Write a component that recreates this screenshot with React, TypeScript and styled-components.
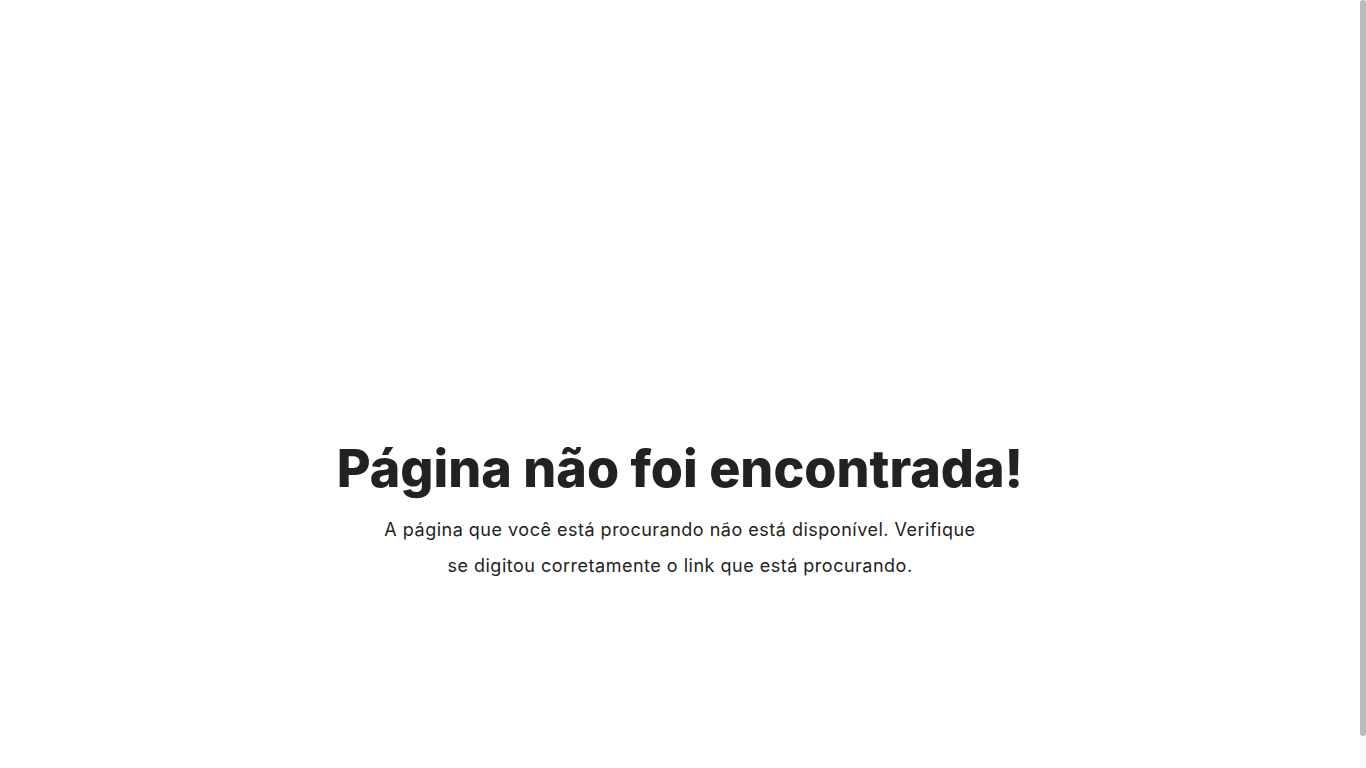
import React from 'react';
import styled, { createGlobalStyle } from 'styled-components';

const GlobalStyle = createGlobalStyle`
  * {
    box-sizing: border-box;
  }
  html, body {
    margin: 0;
    padding: 0;
    background: #fff;
    font-family: Inter, "Noto Sans", "Liberation Sans", sans-serif;
    color: #222;
  }
`;

const Page = styled.main`
  min-height: 768px;
  display: flex;
  flex-direction: column;
  align-items: center;
  padding: 436px 6px 0 0;
`;

const Title = styled.h1`
  margin: 0;
  font-size: 52px;
  font-weight: 800;
  line-height: 66px;
  color: #222;
  text-align: center;
`;

const Message = styled.p`
  margin: 10px 0 0;
  max-width: 600px;
  font-size: 18px;
  font-weight: 400;
  letter-spacing: 0.5px;
  line-height: 36px;
  color: #222;
  text-align: center;
`;

// the browser hides real scrollbars here, so the page's thin one is drawn over the edge
const ScrollTrack = styled.div`
  position: fixed;
  top: 0;
  right: 0;
  width: 6px;
  height: 100vh;
  background: #fafafa;
`;

const ScrollThumb = styled.div`
  width: 6px;
  height: 736px;
  background: #bbb;
  border-radius: 3px;
`;

export default function App() {
  return (
    <>
      <GlobalStyle />
      <Page>
        <Title>Página não foi encontrada!</Title>
        <Message>
          A página que você está procurando não está disponível. Verifique se digitou
          corretamente o link que está procurando.
        </Message>
      </Page>
      <ScrollTrack aria-hidden="true">
        <ScrollThumb />
      </ScrollTrack>
    </>
  );
}
